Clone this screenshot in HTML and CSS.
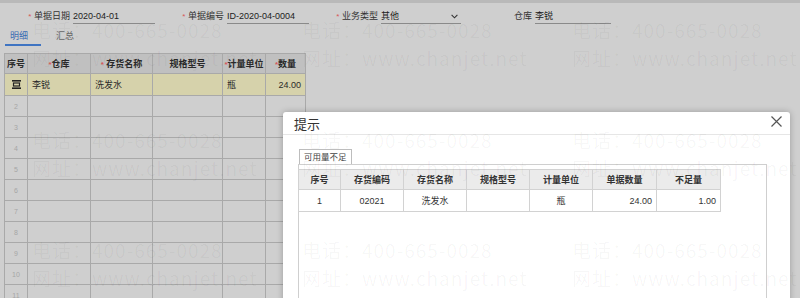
FILE: index.html
```html
<!DOCTYPE html>
<html lang="zh-CN">
<head>
<meta charset="utf-8">
<title>单据</title>
<link rel="stylesheet" href="styles.css">
</head>
<body>
<div class="topbar"></div>
<div class="form">
  <div class="field"><span class="label"><i class="req">*</i> 单据日期</span><span class="value">2020-04-01</span></div>
  <div class="field"><span class="label"><i class="req">*</i> 单据编号</span><span class="value">ID-2020-04-0004</span></div>
  <div class="field"><span class="label"><i class="req">*</i> 业务类型</span><span class="value select">其他<svg class="chev" width="7" height="5" viewBox="0 0 7 5"><path d="M0.6 0.8 L3.5 3.8 L6.4 0.8" fill="none" stroke="#333" stroke-width="1.1"/></svg></span></div>
  <div class="field"><span class="label">仓库</span><span class="value short">李锐</span></div>
</div>
<div class="tabs">
  <span class="tab active">明细</span>
  <span class="tab">汇总</span>
</div>
<table class="grid">
  <colgroup><col class="c1"><col class="c2"><col class="c3"><col class="c4"><col class="c5"><col class="c6"></colgroup>
  <thead>
    <tr><th>序号</th><th><i class="req">*</i>仓库</th><th><i class="req">*</i> 存货名称</th><th>规格型号</th><th><i class="req">*</i>计量单位</th><th><i class="req">*</i>数量</th></tr>
  </thead>
  <tbody>
    <tr class="sel"><td class="num"><svg width="9" height="9" viewBox="0 0 9 9"><rect x="0" y="0" width="9" height="1.6" fill="#222"/><rect x="1.5" y="3" width="6" height="3" fill="none" stroke="#222" stroke-width="1.2"/><rect x="0" y="7.4" width="9" height="1.6" fill="#222"/></svg></td><td>李锐</td><td>洗发水</td><td></td><td>瓶</td><td class="r">24.00</td></tr>
    <tr><td class="num">2</td><td></td><td></td><td></td><td></td><td></td></tr>
    <tr><td class="num">3</td><td></td><td></td><td></td><td></td><td></td></tr>
    <tr><td class="num">4</td><td></td><td></td><td></td><td></td><td></td></tr>
    <tr><td class="num">5</td><td></td><td></td><td></td><td></td><td></td></tr>
    <tr><td class="num">6</td><td></td><td></td><td></td><td></td><td></td></tr>
    <tr><td class="num">7</td><td></td><td></td><td></td><td></td><td></td></tr>
    <tr><td class="num">8</td><td></td><td></td><td></td><td></td><td></td></tr>
    <tr><td class="num">9</td><td></td><td></td><td></td><td></td><td></td></tr>
    <tr><td class="num">10</td><td></td><td></td><td></td><td></td><td></td></tr>
    <tr><td class="num">11</td><td></td><td></td><td></td><td></td><td></td></tr>
  </tbody>
</table>

<div class="dialog">
  <div class="dlg-title"><span>提示</span><svg class="close" width="11" height="11" viewBox="0 0 11 11"><path d="M0.5 0.5 L10.5 10.5 M10.5 0.5 L0.5 10.5" stroke="#555" stroke-width="1.2"/></svg></div>
  <div class="dlg-body">
    <div class="ptab">可用量不足</div>
    <div class="panel">
      <table class="dgrid">
        <colgroup><col class="d1"><col class="d2"><col class="d2"><col class="d2"><col class="d2"><col class="d3"><col class="d3"></colgroup>
        <thead><tr><th>序号</th><th>存货编码</th><th>存货名称</th><th>规格型号</th><th>计量单位</th><th>单据数量</th><th>不足量</th></tr></thead>
        <tbody><tr><td class="c">1</td><td class="c">02021</td><td class="c">洗发水</td><td></td><td class="c">瓶</td><td class="r">24.00</td><td class="r">1.00</td></tr></tbody>
      </table>
    </div>
  </div>
</div>

<div class="watermarks">
  <div class="wm"><div>电话：400-665-0028</div><div>网址：www.chanjet.net</div></div>
  <div class="wm"><div>电话：400-665-0028</div><div>网址：www.chanjet.net</div></div>
  <div class="wm"><div>电话：400-665-0028</div><div>网址：www.chanjet.net</div></div>
  <div class="wm"><div>电话：400-665-0028</div><div>网址：www.chanjet.net</div></div>
  <div class="wm"><div>电话：400-665-0028</div><div>网址：www.chanjet.net</div></div>
  <div class="wm"><div>电话：400-665-0028</div><div>网址：www.chanjet.net</div></div>
  <div class="wm"><div>电话：400-665-0028</div><div>网址：www.chanjet.net</div></div>
  <div class="wm"><div>电话：400-665-0028</div><div>网址：www.chanjet.net</div></div>
  <div class="wm"><div>电话：400-665-0028</div><div>网址：www.chanjet.net</div></div>
</div>
</body>
</html>
```
FILE: styles.css
```css
html, body {
  margin: 0;
  padding: 0;
  height: 100%;
  overflow: hidden;
}
body {
  background: #cfcfcf;
  font-family: "Liberation Sans", "Noto Sans CJK SC", sans-serif;
  font-size: 9px;
  color: #2a2a2a;
  position: relative;
}
i { font-style: normal; }
.req { color: #d8585a; font-size: 8px; }

.topbar { height: 3px; background: #b9b9b9; }

.form {
  display: flex;
  padding: 6px 0 0 22px;
}
.field {
  width: 154px;
  display: flex;
  line-height: 14px;
}
.label {
  width: 48px;
  text-align: right;
  color: #333;
}
.value {
  margin-left: 3px;
  width: 82px;
  border-bottom: 1px solid #8a8a8a;
  color: #222;
  white-space: nowrap;
  display: flex;
  align-items: center;
}
.value.select { justify-content: space-between; width: 80px; }
.value.short { width: 76px; }
.chev { margin-right: 3px; }

.tabs {
  display: flex;
  margin-top: 5px;
  padding-left: 5px;
  gap: 10px;
}
.tab {
  line-height: 14px;
  padding: 0 13px 1px 5px;
  border-bottom: 2px solid transparent;
  color: #666;
}
.tab.active {
  color: #3a6bb3;
  border-bottom-color: #3f74c2;
}

.grid {
  margin: 7px 0 0 4px;
  width: 301px;
  border-collapse: collapse;
  table-layout: fixed;
}
.grid .c1 { width: 23px; }
.grid .c2 { width: 63px; }
.grid .c3 { width: 62px; }
.grid .c4 { width: 70px; }
.grid .c5 { width: 43px; }
.grid .c6 { width: 40px; }
.grid th, .grid td {
  border: 1px solid #a9a9a9;
  padding: 0 4px;
  white-space: nowrap;
  overflow: hidden;
}
.grid th {
  height: 19px;
  background: #c0c0c0;
  font-weight: bold;
  text-align: center;
  color: #2a2a2a;
  padding: 0;
}
.grid td { height: 20px; }
.grid tr.sel td { height: 21px; background: #d6d2ab; }
.grid td.num {
  text-align: center;
  color: #a6a6a6;
  font-size: 7px;
  padding: 0;
}
.grid tr.sel td.num svg { display: block; margin: 0 auto; }
.grid td.r { text-align: right; }

.dialog {
  position: absolute;
  left: 283px;
  top: 112px;
  width: 507px;
  height: 220px;
  background: #fff;
  border-radius: 3px;
  box-shadow: 0 0 6px rgba(0,0,0,0.25);
}
.dlg-title {
  height: 22px;
  border-bottom: 1px solid #e6e6e6;
  display: flex;
  align-items: center;
  justify-content: space-between;
  padding: 0 8px 0 11px;
  font-family: "Noto Sans CJK SC", sans-serif;
  font-size: 13px;
  color: #333;
}
.close { margin-top: -4px; }
.dlg-body { padding: 14px 23px 0 15px; }
.ptab {
  display: inline-block;
  margin-left: 1px;
  height: 14px;
  line-height: 14px;
  padding: 0 4px;
  border: 1px solid #bdbdbd;
  border-bottom: none;
  font-size: 8.5px;
  color: #444;
  vertical-align: top;
}
.panel {
  border: 1px solid #cfcfcf;
  border-bottom: none;
  height: 140px;
  padding-top: 4px;
}
.dgrid {
  width: 422px;
  border-collapse: collapse;
  table-layout: fixed;
  margin-left: -1px;
}
.dgrid .d1 { width: 42px; }
.dgrid .d2 { width: 63px; }
.dgrid .d3 { width: 64px; }
.dgrid th, .dgrid td {
  border: 1px solid #d2d2d2;
  padding: 0 4px;
  white-space: nowrap;
  color: #333;
}
.dgrid th {
  height: 19px;
  background: #ebebeb;
  font-weight: bold;
  text-align: center;
  padding: 0;
}
.dgrid td { height: 21px; }
.dgrid td.c { text-align: center; }
.dgrid td.r { text-align: right; }

.watermarks {
  position: absolute;
  inset: 0;
  pointer-events: none;
  display: grid;
  grid-template-columns: repeat(3, 270px);
  grid-auto-rows: 110px;
  padding: 16px 0 0 32px;
  font-family: "Noto Sans CJK SC", sans-serif;
  font-size: 19px;
  letter-spacing: 1px;
  line-height: 28px;
  color: rgba(0,0,0,0.04);
  white-space: nowrap;
  overflow: hidden;
}
```
